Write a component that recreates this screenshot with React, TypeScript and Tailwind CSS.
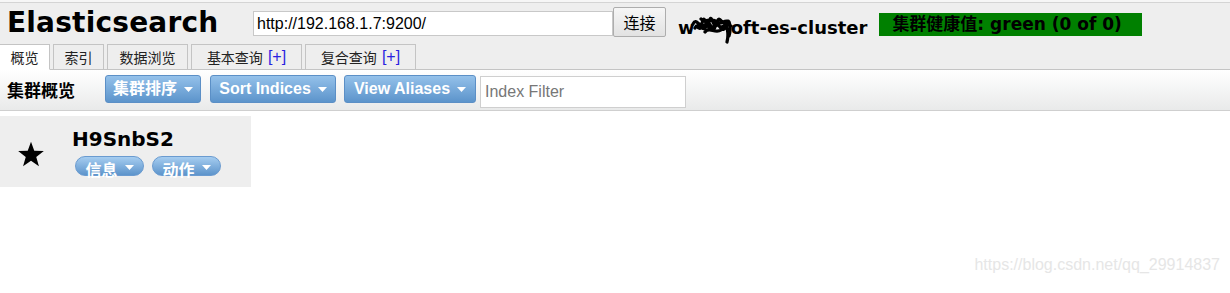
import React from "react";

const cjk = '"DejaVu Sans", "Noto Sans CJK SC", sans-serif';
const arial = '"Liberation Sans", Arial, "Noto Sans CJK SC", sans-serif';

function Caret() {
  return (
    <svg width="9" height="5" viewBox="0 0 9 5" className="ml-[7px] mt-[2px]">
      <path d="M0 0 L9 0 L4.5 5 Z" fill="#ffffff" />
    </svg>
  );
}

function ToolBtn({ label, w }: { label: string; w: string }) {
  return (
    <div
      className={`flex h-[28px] items-center justify-center rounded-[3px] border border-[#5b8fc6] bg-gradient-to-b from-[#94c1ea] to-[#5c94cb] text-[16px] font-bold text-white ${w}`}
      style={{ fontFamily: arial }}
    >
      <span>{label}</span>
      <Caret />
    </div>
  );
}

function Pill({ label }: { label: string }) {
  return (
    <div
      className="flex h-[20px] w-[69px] items-center justify-center overflow-visible rounded-full border border-[#6a9bd0] bg-gradient-to-b from-[#a6cdf0] to-[#5d94cb] text-[16px] font-bold leading-[20px] text-white"
      style={{ fontFamily: '"Noto Sans CJK SC", sans-serif' }}
    >
      <span className="mt-[6px]">{label}</span>
      <Caret />
    </div>
  );
}

function Tab({ children, active, w }: { children: React.ReactNode; active?: boolean; w: string }) {
  return (
    <div
      className={`flex h-[26px] items-center justify-center border border-[#c4c4c4] text-[14px] text-[#222] ${w} ${
        active ? "border-b-white bg-white" : "bg-[#eeeeee]"
      }`}
      style={{ fontFamily: '"Noto Sans CJK SC", sans-serif' }}
    >
      {children}
    </div>
  );
}

export default function App() {
  return (
    <div className="h-[293px] w-[1230px] overflow-hidden bg-white">
      <div className="h-[2px] bg-[#f6f6f6]" />
      <div className="border-t border-[#d4d4d4] bg-[#eeeeee]">
        <div className="flex h-[41px] items-start">
          <div
            className="ml-[7px] mt-[1px] w-[246px] text-[28px] font-bold leading-[38px] text-black"
            style={{ fontFamily: '"DejaVu Sans", Verdana, sans-serif', letterSpacing: "0.2px" }}
          >
            Elasticsearch
          </div>
          <div
            className="mt-[8px] flex h-[25px] w-[360px] items-center border border-[#c8c8c8] bg-white px-[3px] text-[16px] text-black"
            style={{ fontFamily: arial }}
          >
            http://192.168.1.7:9200/
          </div>
          <div
            className="mt-[4px] flex h-[30px] w-[53px] items-center justify-center rounded-[2px] border border-[#adadad] bg-gradient-to-b from-[#f6f6f6] to-[#e2e2e2] text-[16px] text-black"
            style={{ fontFamily: '"Noto Sans CJK SC", sans-serif' }}
          >
            连接
          </div>
          <div
            className="ml-[12px] mt-[9px] flex items-center text-[18px] font-bold leading-[24px] text-black"
            style={{ fontFamily: '"DejaVu Sans", Verdana, sans-serif' }}
          >
            <span>w</span>
            <svg width="44" height="30" viewBox="0 0 44 30" className="-ml-[4px] -mr-[4px] mt-[2px]">
              <path
                d="M2 10 C6 2 9 18 12 6 C14 1 16 20 19 5 C21 0 24 22 27 6 C29 2 33 14 36 8 C39 4 40 16 38 22 M4 14 C8 6 12 22 16 10 C19 4 22 24 25 10 C27 6 30 20 34 14 C36 10 38 20 36 28 M6 12 C10 20 14 4 18 14 C20 20 24 6 28 12 C31 16 34 8 40 12 M10 5 C14 10 20 2 26 8 C30 12 34 4 38 8 M14 18 C18 12 24 20 30 16"
                stroke="#000"
                strokeWidth="3.2"
                fill="none"
                strokeLinecap="round"
              />
            </svg>
            <span>oft-es-cluster</span>
          </div>
          <div
            className="ml-[12px] mt-[10px] flex h-[23px] w-[263px] items-center bg-[#008000] pl-[13px] text-[17px] font-bold text-black"
            style={{ fontFamily: cjk }}
          >
            集群健康值: green (0 of 0)
          </div>
        </div>
        <div className="flex h-[26px] items-end gap-[3px] border-b border-[#c4c4c4]">
          <div className="-mb-px flex gap-[3px]">
            <Tab active w="w-[51px] -ml-px">概览</Tab>
            <Tab w="w-[51px]">索引</Tab>
            <Tab w="w-[81px]">数据浏览</Tab>
            <Tab w="w-[111px]">
              基本查询 <span className="ml-[5px] text-[16px] text-[#2a1fe0]" style={{ fontFamily: arial }}>[+]</span>
            </Tab>
            <Tab w="w-[111px]">
              复合查询 <span className="ml-[5px] text-[16px] text-[#2a1fe0]" style={{ fontFamily: arial }}>[+]</span>
            </Tab>
          </div>
        </div>
      </div>
      <div className="flex h-[41px] items-center border-b border-[#cfcfcf] bg-gradient-to-b from-white to-[#e9eaea]">
        <div
          className="ml-[7px] w-[98px] text-[17px] font-bold text-black"
          style={{ fontFamily: '"Noto Sans CJK SC", sans-serif' }}
        >
          集群概览
        </div>
        <div className="-mt-[3px] flex items-center gap-[9px]">
          <ToolBtn label="集群排序" w="w-[96px]" />
          <ToolBtn label="Sort Indices" w="w-[126px]" />
        </div>
        <div className="-mt-[3px] ml-[8px]">
          <ToolBtn label="View Aliases" w="w-[132px]" />
        </div>
        <div
          className="ml-[4px] mt-[3px] flex h-[32px] w-[206px] items-center border border-[#cfcfcf] bg-white px-[4px] text-[16px] text-[#777]"
          style={{ fontFamily: arial }}
        >
          Index Filter
        </div>
      </div>
      <div className="mt-[5px] flex h-[71px] w-[251px] items-center bg-[#eeeeee]">
        <svg width="28" height="27" viewBox="0 0 24 23" className="ml-[17px] mt-[6px]">
          <path d="M12 0.5 L14.8 8.3 L23 8.5 L16.5 13.6 L18.8 21.6 L12 16.9 L5.2 21.6 L7.5 13.6 L1 8.5 L9.2 8.3 Z" fill="#000" />
        </svg>
        <div className="ml-[27px] flex flex-col">
          <div
            className="text-[20px] font-bold leading-[24px] text-black"
            style={{ fontFamily: '"DejaVu Sans", Verdana, sans-serif' }}
          >
            H9SnbS2
          </div>
          <div className="ml-[3px] mt-[5px] flex gap-[8px]">
            <Pill label="信息" />
            <Pill label="动作" />
          </div>
        </div>
      </div>
      <div
        className="mt-[66px] mr-[10px] text-right text-[16px] text-[#e6e6e6]"
        style={{ fontFamily: arial }}
      >
        https://blog.csdn.net/qq_29914837
      </div>
    </div>
  );
}
